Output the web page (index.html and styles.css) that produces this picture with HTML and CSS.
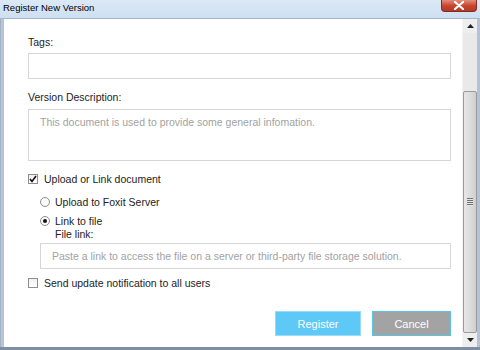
FILE: index.html
```html
<!DOCTYPE html>
<html lang="en">
<head>
    <meta charset="UTF-8">
    <title>Register New Version</title>
    <link rel="stylesheet" href="styles.css">
</head>
<body>

<div class="window">
    <div class="title-bar">
        <span class="title-text">Register New Version</span>
        <span class="close-btn">
            <svg width="12" height="9" viewBox="0 0 12 9"><path d="M2 1 L10 8 M10 1 L2 8" stroke="#fff" stroke-width="2.2" stroke-linecap="round"/></svg>
        </span>
    </div>

    <div class="window-body">
        <div class="client">
            <div class="field-label">Tags:</div>
            <div class="text-box tags-box"></div>

            <div class="field-label desc-label">Version Description:</div>
            <div class="text-box desc-box">
                <span class="placeholder">This document is used to provide some general infomation.</span>
            </div>

            <div class="option-row upload-row">
                <span class="check checked">
                    <svg width="8" height="8" viewBox="0 0 8 8"><path d="M1 4 L3 6.5 L7 1" fill="none" stroke="#111" stroke-width="1.6"/></svg>
                </span>
                Upload or Link document
            </div>

            <div class="sub-options">
                <div class="option-row radio-first">
                    <span class="radio"></span>
                    Upload to Foxit Server
                </div>
                <div class="option-row radio-second">
                    <span class="radio selected"></span>
                    Link to file
                </div>
                <div class="file-link-label">File link:</div>
                <div class="text-box link-box">
                    <span class="placeholder">Paste a link to access the file on a server or third-party file storage solution.</span>
                </div>
            </div>

            <div class="option-row notify-row">
                <span class="check"></span>
                Send update notification to all users
            </div>

            <div class="button-row">
                <button class="btn btn-register">Register</button>
                <button class="btn btn-cancel">Cancel</button>
            </div>
        </div>

        <div class="scrollbar">
            <div class="scroll-arrow">
                <svg width="7" height="4" viewBox="0 0 7 4"><path d="M0 4 L3.5 0 L7 4 Z" fill="#222"/></svg>
            </div>
            <div class="scroll-track">
                <div class="scroll-thumb">
                    <span class="grip"></span>
                </div>
            </div>
            <div class="scroll-arrow">
                <svg width="7" height="4" viewBox="0 0 7 4"><path d="M0 0 L3.5 4 L7 0 Z" fill="#222"/></svg>
            </div>
        </div>
    </div>
</div>

</body>
</html>
```

FILE: styles.css
```css
/* --- Page --- */
body {
    margin: 0;
    font-family: "Liberation Sans", Arial, sans-serif;
    background-color: #ffffff;
}

/* --- Window frame --- */
.window {
    width: 480px;
    height: 350px;
    box-sizing: border-box;
    display: flex;
    flex-direction: column;
    background: linear-gradient(to right, #8d9db1 0, #b9c8d9 1px, #b3c3d5 3px, #b3c3d5 100%);
    border-bottom: 3px solid #7f8fa3;
}

.title-bar {
    height: 19px;
    flex: none;
    display: flex;
    justify-content: space-between;
    align-items: flex-start;
    background: linear-gradient(to bottom, #dce9f6, #cddff1);
    border-bottom: 1px solid #a7b7c8;
    box-sizing: border-box;
}

.title-text {
    font-size: 9.5px;
    color: #000;
    line-height: 16px;
    padding-left: 3px;
}

.close-btn {
    width: 34px;
    height: 11px;
    margin-right: 3px;
    display: flex;
    align-items: center;
    justify-content: center;
    background: linear-gradient(to bottom, #e48c7c, #c4432d 55%, #b53a25);
    border: 1px solid #7e2d20;
    border-top: none;
    border-radius: 0 0 4px 4px;
}

/* --- Body: client area + scrollbar --- */
.window-body {
    flex: 1;
    display: flex;
    padding: 0 3px 0 4px;
    min-height: 0;
}

.client {
    flex: 1;
    background-color: #ffffff;
    padding: 16px 11px 0 24px;
    color: #222;
    font-size: 10.5px;
}

.field-label {
    line-height: 14px;
}

.desc-label {
    margin-top: 11px;
}

.text-box {
    box-sizing: border-box;
    border: 1px solid #d6d6d6;
    background-color: #fff;
    padding: 5px 11px;
    line-height: 14px;
}

.tags-box {
    height: 26px;
    margin-top: 4px;
}

.desc-box {
    height: 52px;
    margin-top: 5px;
}

.placeholder {
    color: #a2a2a2;
}

/* --- Checkboxes & radios --- */
.option-row {
    display: flex;
    align-items: center;
    line-height: 14px;
}

.upload-row {
    margin-top: 11px;
}

.notify-row {
    margin-top: 7px;
}

.check {
    width: 10px;
    height: 10px;
    box-sizing: border-box;
    border: 1px solid #8e8e8e;
    background: linear-gradient(to bottom, #f0f0f0, #ffffff);
    margin-right: 6px;
    display: flex;
    align-items: center;
    justify-content: center;
}

.sub-options {
    padding-left: 12px;
}

.radio-first {
    margin-top: 9px;
}

.radio-second {
    margin-top: 5px;
}

.radio {
    width: 10px;
    height: 10px;
    box-sizing: border-box;
    border: 1px solid #8e8e8e;
    border-radius: 50%;
    background: #fafafa;
    margin-right: 5px;
    display: flex;
    align-items: center;
    justify-content: center;
}

.radio.selected::after {
    content: "";
    width: 4px;
    height: 4px;
    border-radius: 50%;
    background-color: #111;
}

.file-link-label {
    padding-left: 15px;
    line-height: 12px;
}

.link-box {
    height: 26px;
    margin-top: 3px;
}

/* --- Buttons --- */
.button-row {
    display: flex;
    justify-content: flex-end;
    gap: 11px;
    margin-top: 21px;
}

.btn {
    height: 25px;
    font-family: inherit;
    font-size: 11px;
    color: #fff;
    cursor: pointer;
}

.btn-register {
    width: 86px;
    background-color: #5ec8f6;
    border: 1px solid #9adcf8;
}

.btn-cancel {
    width: 79px;
    background-color: #a3a3a3;
    border: 1px solid #5bc3e3;
}

/* --- Scrollbar --- */
.scrollbar {
    width: 14px;
    flex: none;
    display: flex;
    flex-direction: column;
    background-color: #e9e9e9;
    border-left: 1px solid #f4f4f4;
}

.scroll-arrow {
    height: 14px;
    display: flex;
    align-items: center;
    justify-content: center;
    background-color: #eeeeee;
}

.scroll-track {
    flex: 1;
    display: flex;
    flex-direction: column;
    padding-top: 58px;
}

.scroll-thumb {
    flex: 1;
    box-sizing: border-box;
    border: 1px solid #9a9a9a;
    border-radius: 2px;
    background: linear-gradient(to right, #e6e6e6, #dcdcdc 50%, #cfcfcf);
    display: flex;
    align-items: center;
    justify-content: center;
}

.grip {
    width: 6px;
    height: 8px;
    background: repeating-linear-gradient(to bottom, #707070 0, #707070 1px, #e6e6e6 1px, #e6e6e6 2px);
    margin-top: -20px;
}
```
